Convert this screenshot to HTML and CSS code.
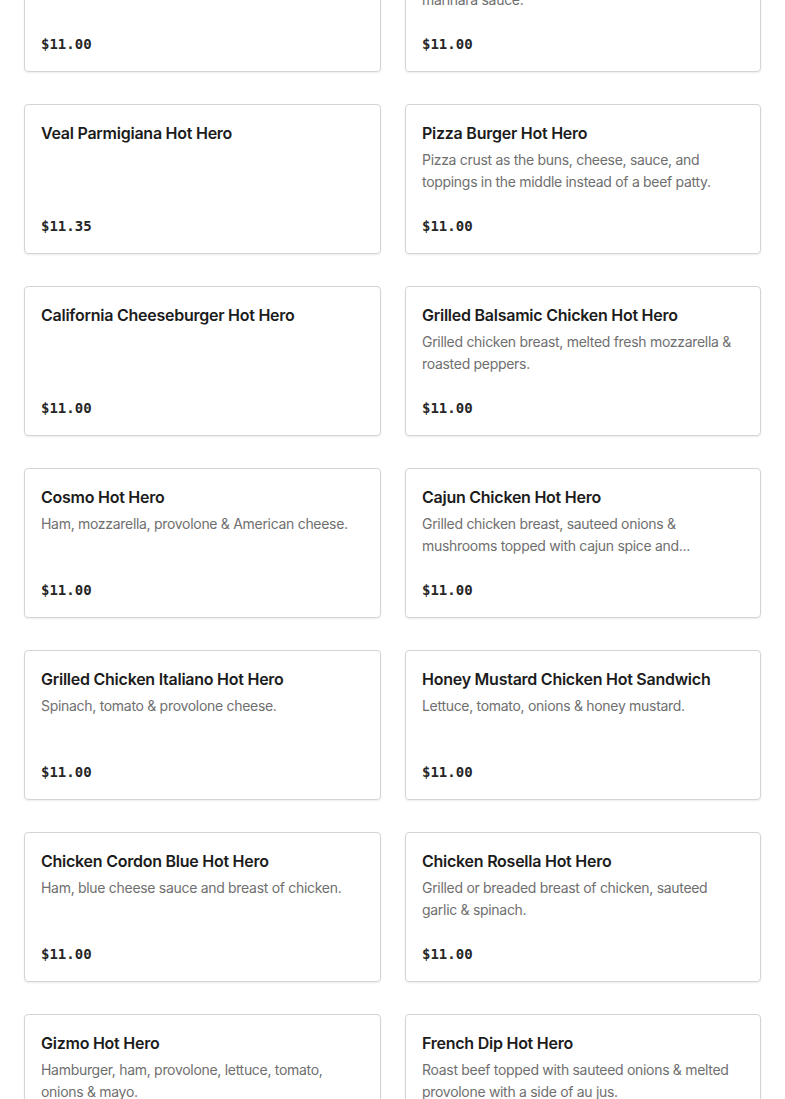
FILE: index.html
```html
<!DOCTYPE html>
<html lang="en">
<head>
<meta charset="utf-8">
<title>Hot Heroes</title>
<link rel="stylesheet" href="styles.css">
</head>
<body>
<div class="menu-grid">
  <div class="card">
    <div class="title">Meatball Parmigiana Hot Hero</div>
    <div class="desc"></div>
    <div class="price">$11.00</div>
  </div>
  <div class="card">
    <div class="title">Sausage Parmigiana Hot Hero</div>
    <div class="desc">Italian sausage topped with melted mozzarella &amp; marinara sauce.</div>
    <div class="price">$11.00</div>
  </div>

  <div class="card">
    <div class="title">Veal Parmigiana Hot Hero</div>
    <div class="desc"></div>
    <div class="price">$11.35</div>
  </div>
  <div class="card">
    <div class="title">Pizza Burger Hot Hero</div>
    <div class="desc">Pizza crust as the buns, cheese, sauce, and toppings in the middle instead of a beef patty.</div>
    <div class="price">$11.00</div>
  </div>

  <div class="card">
    <div class="title">California Cheeseburger Hot Hero</div>
    <div class="desc"></div>
    <div class="price">$11.00</div>
  </div>
  <div class="card">
    <div class="title">Grilled Balsamic Chicken Hot Hero</div>
    <div class="desc">Grilled chicken breast, melted fresh mozzarella &amp; roasted peppers.</div>
    <div class="price">$11.00</div>
  </div>

  <div class="card">
    <div class="title">Cosmo Hot Hero</div>
    <div class="desc">Ham, mozzarella, provolone &amp; American cheese.</div>
    <div class="price">$11.00</div>
  </div>
  <div class="card">
    <div class="title">Cajun Chicken Hot Hero</div>
    <div class="desc">Grilled chicken breast, sauteed onions &amp; mushrooms topped with cajun spice and...</div>
    <div class="price">$11.00</div>
  </div>

  <div class="card">
    <div class="title">Grilled Chicken Italiano Hot Hero</div>
    <div class="desc">Spinach, tomato &amp; provolone cheese.</div>
    <div class="price">$11.00</div>
  </div>
  <div class="card">
    <div class="title">Honey Mustard Chicken Hot Sandwich</div>
    <div class="desc">Lettuce, tomato, onions &amp; honey mustard.</div>
    <div class="price">$11.00</div>
  </div>

  <div class="card">
    <div class="title">Chicken Cordon Blue Hot Hero</div>
    <div class="desc">Ham, blue cheese sauce and breast of chicken.</div>
    <div class="price">$11.00</div>
  </div>
  <div class="card">
    <div class="title">Chicken Rosella Hot Hero</div>
    <div class="desc">Grilled or breaded breast of chicken, sauteed garlic &amp; spinach.</div>
    <div class="price">$11.00</div>
  </div>

  <div class="card">
    <div class="title">Gizmo Hot Hero</div>
    <div class="desc">Hamburger, ham, provolone, lettuce, tomato, onions &amp; mayo.</div>
    <div class="price">$11.00</div>
  </div>
  <div class="card">
    <div class="title">French Dip Hot Hero</div>
    <div class="desc">Roast beef topped with sauteed onions &amp; melted provolone with a side of au jus.</div>
    <div class="price">$11.00</div>
  </div>
</div>
</body>
</html>
```
FILE: styles.css
```css
html, body {
  margin: 0;
  padding: 0;
  background: #ffffff;
  overflow: hidden;
}

body {
  font-family: "Inter", "Liberation Sans", sans-serif;
  color: #1f1f1f;
}

.menu-grid {
  display: grid;
  grid-template-columns: 357px 356px;
  column-gap: 24px;
  row-gap: 32px;
  padding: 0 24px;
  margin-top: -78px;
}

.card {
  box-sizing: border-box;
  height: 150px;
  border: 1px solid #d4d4d4;
  border-radius: 4px;
  box-shadow: 0 1px 2px rgba(0, 0, 0, 0.08);
  padding: 16px;
  display: flex;
  flex-direction: column;
}

.title {
  font-size: 16px;
  font-weight: 600;
  line-height: 24px;
  color: #1c1c1c;
  letter-spacing: -0.25px;
}

.desc {
  margin-top: 4px;
  font-size: 14px;
  line-height: 22px;
  color: #6f6f6f;
  letter-spacing: -0.3px;
  display: -webkit-box;
  -webkit-line-clamp: 2;
  -webkit-box-orient: vertical;
  overflow: hidden;
}

.price {
  margin-top: auto;
  margin-bottom: 1px;
  font-family: "DejaVu Sans Mono", "Liberation Mono", monospace;
  font-size: 14px;
  font-weight: 700;
  line-height: 20px;
  color: #262626;
}
```
